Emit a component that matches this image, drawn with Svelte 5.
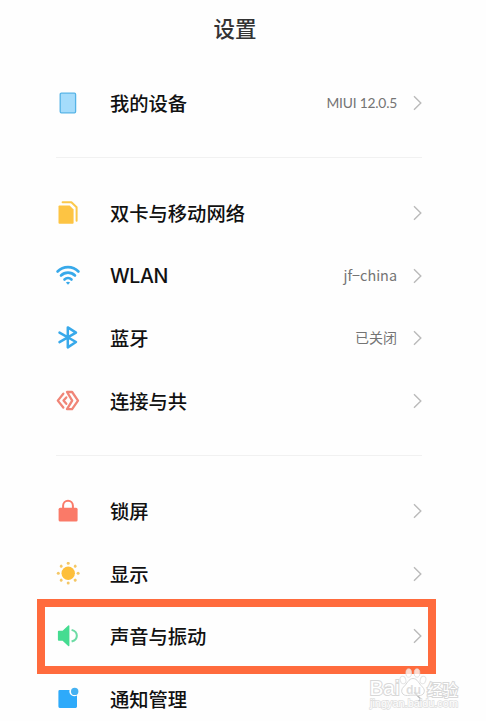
<script>
  // 设置项分组
  const groups = [
    [{ icon: 'device', label: '我的设备', value: 'MIUI 12.0.5' }],
    [
      { icon: 'sim', label: '双卡与移动网络' },
      { icon: 'wifi', label: 'WLAN', value: 'jf−china' },
      { icon: 'bluetooth', label: '蓝牙', value: '已关闭' },
      { icon: 'share', label: '连接与共' },
    ],
    [
      { icon: 'lock', label: '锁屏' },
      { icon: 'display', label: '显示' },
      { icon: 'sound', label: '声音与振动', active: true },
      { icon: 'notice', label: '通知管理' },
    ],
  ];

  // 太阳图标周围的光点角度
  const rays = [0, 45, 90, 135, 180, 225, 270, 315];
</script>

<main class="settings">
  <h1>设置</h1>

  {#each groups as group}
    <ul class="group">
      {#each group as item}
        <li class="row" class:latin={item.label === 'WLAN'}>
          <svg class="icon" viewBox="0 0 24 24" width="24" height="24">
            {#if item.icon === 'device'}
              <rect x="4.2" y="2.2" width="15.4" height="19.6" rx="1.2" fill="#a5dcfb" stroke="#55b3e6" stroke-width="1.3" />
            {:else if item.icon === 'sim'}
              <path d="M6.6 1.3H15.4L20.6 6.3V19.8" fill="none" stroke="#fbc84b" stroke-width="2" stroke-linejoin="round" stroke-linecap="round" />
              <path d="M3.4 4.6H13.6L17.6 8.4V21.8a.9.9 0 0 1-.9.9H3.4a.9.9 0 0 1-.9-.9V5.5A.9.9 0 0 1 3.4 4.6Z" fill="#fdc443" />
            {:else if item.icon === 'wifi'}
              <g fill="none" stroke="#38a9ea" stroke-width="2.6" stroke-linecap="round">
                <path d="M1.6 7.5C7.2 1.7 16.8 1.7 22.4 7.5" />
                <path d="M5 11.5C8.8 7.6 15.2 7.6 19 11.5" />
                <path d="M8.5 15.5C10.4 13.6 13.6 13.6 15.5 15.5" />
              </g>
              <path d="M9.9 18.5Q12 16.9 14.1 18.5L12 20.8Z" fill="#38a9ea" />
            {:else if item.icon === 'bluetooth'}
              <path d="M3.5 6.6 20 16 11.8 21.4V1.4L20 6.6 3.5 16.2" fill="none" stroke="#38a9ea" stroke-width="2.5" stroke-linejoin="round" stroke-linecap="round" />
            {:else if item.icon === 'share'}
              <g fill="none" stroke="#f08577" stroke-width="2.3" stroke-linejoin="round" stroke-linecap="round">
                <path d="M11 3H16.1L22 11.6 16.1 20.2H11L16.2 11.6Z" />
                <path d="M7.3 4.7 1.8 11.6 7.3 18.5" />
                <path d="M10.3 8.4 7.5 11.6 10.3 14.8" />
              </g>
            {:else if item.icon === 'lock'}
              <path d="M7.1 10V6.7a4.9 4.9 0 0 1 9.8 0V10" fill="none" stroke="#fa7a68" stroke-width="2" />
              <rect x="2.6" y="8.7" width="19" height="13.7" rx="1.5" fill="#fa7a68" />
            {:else if item.icon === 'display'}
              <circle cx="12.2" cy="11.2" r="6.7" fill="#fdbf3b" />
              {#each rays as angle}
                <circle cx="12.2" cy="1.3" r="1.5" fill="#f4c766" transform="rotate({angle} 12.2 11.2)" />
              {/each}
            {:else if item.icon === 'sound'}
              <path d="M2.8 6.7H6.6L12.2 1.5Q13.4.8 13.4 2.2V21.2Q13.4 22.6 12.2 21.9L6.6 16.7H2.8a.9.9 0 0 1-.9-.9V7.6a.9.9 0 0 1 .9-.9Z" fill="#45dc91" />
              <path d="M15.6 5.9C22.6 8 22.6 15.2 15.6 17.5" fill="none" stroke="#6cdba4" stroke-width="2" />
            {:else}
              <path d="M3.7 2.9H13.5A5.1 5.1 0 0 0 21 8.5V19.6a1.3 1.3 0 0 1-1.3 1.3H3.7A1.3 1.3 0 0 1 2.4 19.6V4.2A1.3 1.3 0 0 1 3.7 2.9Z" fill="#2eaafa" />
              <circle cx="18.7" cy="4.4" r="3.7" fill="#45b1f1" />
            {/if}
          </svg>
          <span class="label">{item.label}</span>
          {#if item.value}
            <span class="value" class:miui={item.icon === 'device'}>{item.value}</span>
          {/if}
          <svg class="arrow" viewBox="0 0 9 16" width="9" height="16">
            <path d="M1 1.3 7.8 8 1 14.7" fill="none" stroke="#bababa" stroke-width="1.4" />
          </svg>
          {#if item.active}
            <div class="highlight"></div>
          {/if}
        </li>
      {/each}
    </ul>
  {/each}

  <!-- 右下角水印 -->
  <svg class="watermark" viewBox="0 0 100 52" width="100" height="52">
    <g fill="#fff" fill-opacity="0.75" stroke="#d8d8d8" stroke-width="1">
      <g stroke-opacity="0.7">
        <ellipse cx="39" cy="20" rx="2.8" ry="3.8" transform="rotate(-15 39 20)" />
        <ellipse cx="44.7" cy="13" rx="2.8" ry="4.2" />
        <ellipse cx="53" cy="13" rx="2.8" ry="4.2" />
        <ellipse cx="59" cy="20" rx="2.8" ry="3.8" transform="rotate(15 59 20)" />
      </g>
      <path d="M49 18.5c4.500 0 5.600 5 9.500 8.500 4 4 1 9-4 8.500-3.500-.5-7.500-.5-11 0-5 .5-8-4.500-4-8.500 3.900-3.500 5-8.500 9.500-8.500Z" fill-opacity="0.5" />
      <text class="du" x="42" y="34" font-size="12" textLength="15" lengthAdjust="spacingAndGlyphs">du</text>
      <g paint-order="stroke" fill-opacity="1" stroke-width="2">
        <text x="5.5" y="35" font-size="20" textLength="30" lengthAdjust="spacingAndGlyphs">Bai</text>
        <text x="63" y="35.5" font-size="15.5" textLength="31">经验</text>
        <text x="6" y="47" font-size="11" textLength="88" lengthAdjust="spacingAndGlyphs" stroke="#dedede" stroke-width="1.5">jingyan.baidu.com</text>
      </g>
    </g>
  </svg>
</main>

<style>
  :global(body) {
    margin: 0;
    background: #fefefe;
  }

  .settings {
    position: relative;
    box-sizing: border-box;
    height: 721px;
    padding: 0 64px 0 56px;
    overflow: hidden;
    color: #111;
    font-family: 'Noto Sans CJK SC', sans-serif;
  }

  h1 {
    height: 57px;
    margin: 0 0 14.8px -8px;
    color: #333;
    font-size: 21.5px;
    font-weight: 500;
    line-height: 55px;
    text-align: center;
  }

  .group {
    margin: 0;
    padding: 0;
    list-style: none;
  }

  /* 组与组之间的分割线 */
  .group + .group {
    margin-top: 22.5px;
    padding-top: 24px;
    border-top: 1px solid #f1f1f1;
  }

  .row {
    position: relative;
    display: flex;
    align-items: center;
    height: 62.6px;
  }

  .icon {
    flex: none;
    margin-right: 30px;
  }

  .label {
    flex: 1;
    font-size: 19.3px;
    font-weight: 500;
    line-height: 28px;
    white-space: nowrap;
  }

  .latin .label {
    font-family: Inter, 'Noto Sans CJK SC', sans-serif;
    font-size: 19.6px;
    font-weight: 500;
    letter-spacing: -0.4px;
  }

  .value {
    margin-top: -2px;
    color: #747474;
    font-size: 14px;
    line-height: 20px;
  }

  .latin .value {
    font-size: 14.4px;
  }

  .miui {
    margin-top: 0;
    font-family: Lato, sans-serif;
    font-size: 13.8px;
    letter-spacing: -0.2px;
  }

  .arrow {
    flex: none;
    margin-left: 16px;
  }

  /* 橙色标注框 */
  .highlight {
    position: absolute;
    top: -5.8px;
    right: -14px;
    left: -19px;
    height: 59px;
    border: 8px solid #ff6b3d;
  }

  .watermark {
    position: absolute;
    top: 660px;
    left: 364px;
    font-family: 'Liberation Sans', 'Noto Sans CJK SC', sans-serif;
  }

  .du {
    fill: #d4d4d4;
    stroke: none;
    font-weight: 700;
  }
</style>
